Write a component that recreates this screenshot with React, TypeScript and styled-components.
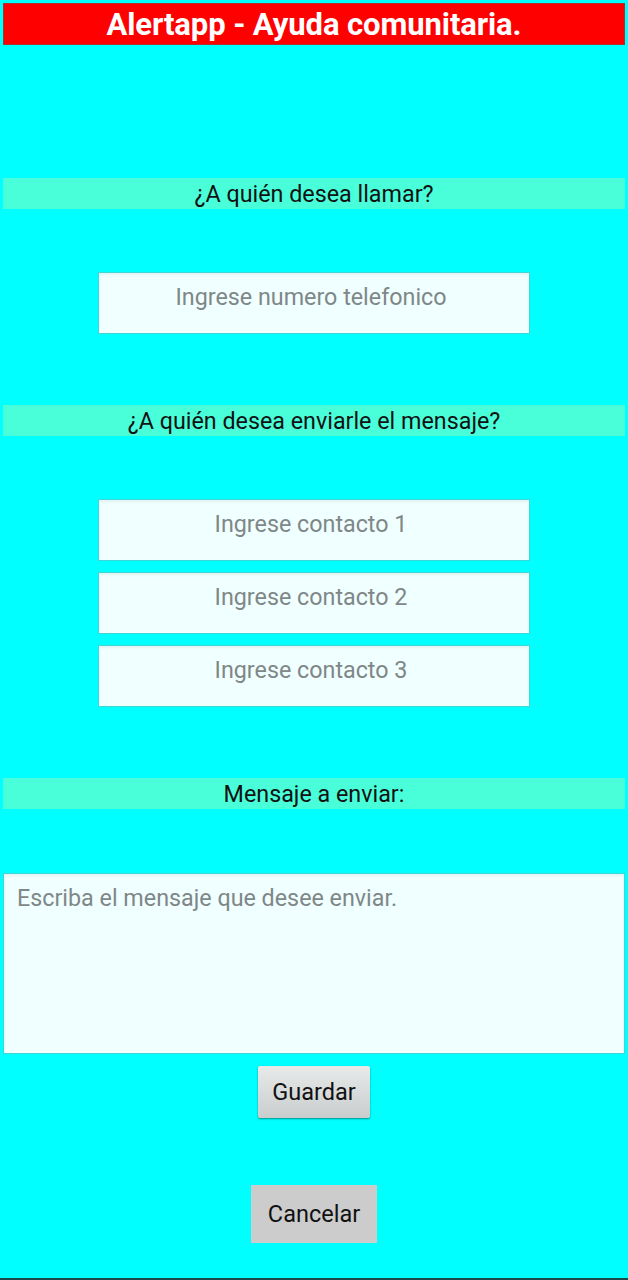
import React from "react";
import styled, { createGlobalStyle } from "styled-components";

const Global = createGlobalStyle`
  html, body { margin: 0; padding: 0; background: #00ffff; }
  body { font-family: Roboto, "Noto Sans", sans-serif; }
  * { box-sizing: border-box; }
`;

const Screen = styled.div`
  width: 628px;
  height: 1280px;
  background: #00ffff;
  padding: 3px 3px 0 3px;
  display: flex;
  flex-direction: column;
  align-items: center;
  border-bottom: 2px solid #1a4a4a;
`;

const Header = styled.div`
  width: 100%;
  height: 42px;
  background: #ff0000;
  box-shadow: inset 0 0 0 1px #b03030;
  color: #ffffff;
  font-weight: 700;
  font-size: 31px;
  letter-spacing: -0.1px;
  display: flex;
  align-items: center;
  justify-content: center;
  padding-top: 1px;
`;

const Label = styled.div<{ $top: number }>`
  width: 100%;
  height: 31px;
  margin-top: ${(p) => p.$top}px;
  background: #48ffda;
  color: #111111;
  font-size: 23.3px;
  display: flex;
  align-items: center;
  justify-content: center;
`;

const Field = styled.div<{ $top: number }>`
  width: 432px;
  height: 62px;
  margin-top: ${(p) => p.$top}px;
  background: #f0ffff;
  border: 1px solid #3fd6d6;
  box-shadow: inset 0 2px 3px rgba(0, 0, 0, 0.06);
  color: #7f8787;
  font-size: 23.3px;
  display: flex;
  justify-content: center;
  padding: 10px 6px 0 0;
`;

const Contacts = styled.div`
  display: flex;
  flex-direction: column;
  gap: 11px;
  margin-top: 63px;
`;

const TextArea = styled.div`
  width: 100%;
  height: 181px;
  margin-top: 64px;
  background: #f0ffff;
  border: 1px solid #3fd6d6;
  box-shadow: inset 0 2px 3px rgba(0, 0, 0, 0.06);
  color: #7f8787;
  font-size: 23.3px;
  padding: 10px 13px;
`;

const SaveButton = styled.div`
  margin-top: 12px;
  width: 112px;
  height: 52px;
  background: linear-gradient(#e8eaea, #c9cdcd);
  border-radius: 2px;
  box-shadow: 0 1px 2px rgba(0, 0, 0, 0.45);
  color: #111111;
  font-size: 23.5px;
  display: flex;
  align-items: center;
  justify-content: center;
`;

const CancelButton = styled.div`
  margin-top: 67px;
  width: 126px;
  height: 58px;
  background: #cccccc;
  color: #111111;
  font-size: 23.5px;
  display: flex;
  align-items: center;
  justify-content: center;
`;

export default function App() {
  return (
    <>
      <Global />
      <Screen>
        <Header>Alertapp - Ayuda comunitaria.</Header>
        <Label $top={133}>¿A quién desea llamar?</Label>
        <Field $top={63}>Ingrese numero telefonico</Field>
        <Label $top={71}>¿A quién desea enviarle el mensaje?</Label>
        <Contacts>
          <Field $top={0}>Ingrese contacto 1</Field>
          <Field $top={0}>Ingrese contacto 2</Field>
          <Field $top={0}>Ingrese contacto 3</Field>
        </Contacts>
        <Label $top={71}>Mensaje a enviar:</Label>
        <TextArea>Escriba el mensaje que desee enviar.</TextArea>
        <SaveButton>Guardar</SaveButton>
        <CancelButton>Cancelar</CancelButton>
      </Screen>
    </>
  );
}
